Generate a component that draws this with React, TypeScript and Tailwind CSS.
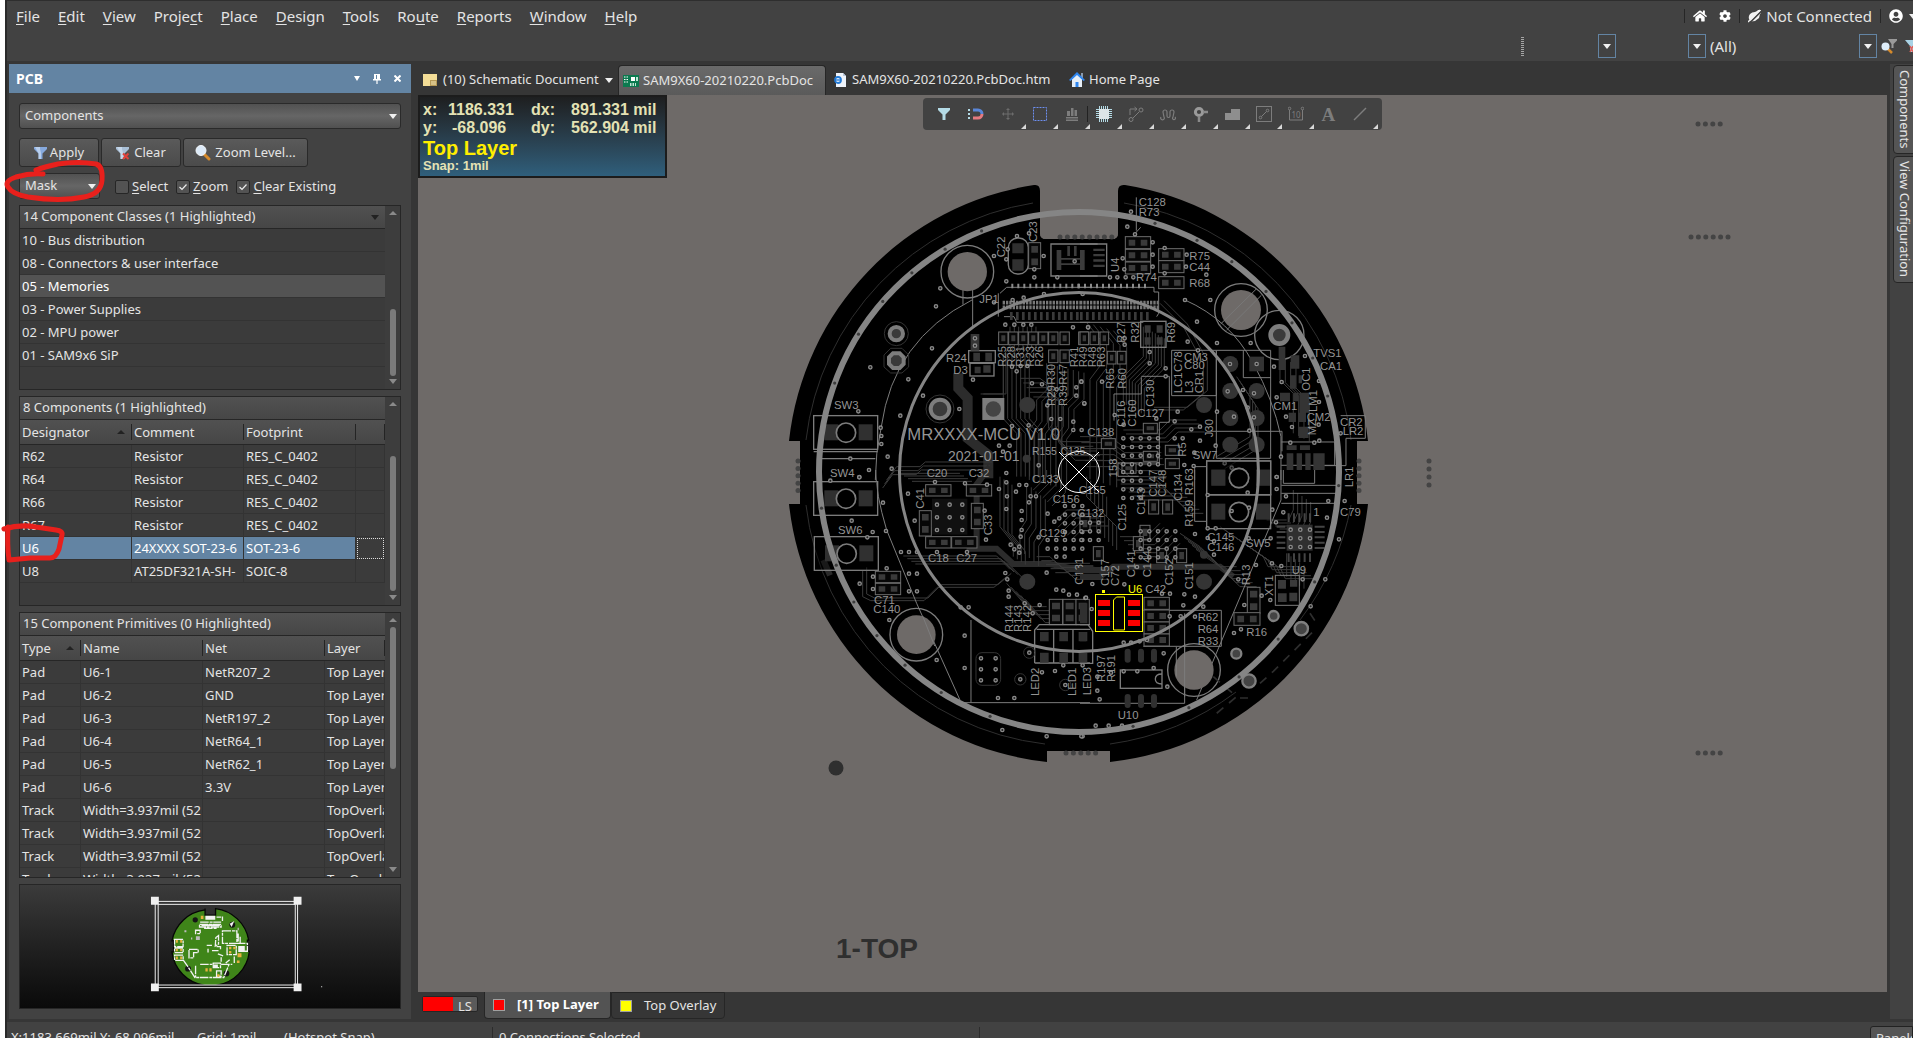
import React from "react";
import { FaHome, FaCog, FaUserCircle } from "react-icons/fa";

const FONT = "font-['Noto_Sans',sans-serif]";

/* ---------- small glyphs ---------- */

function Caret({ className = "text-[#f0f0f0]" }: { className?: string }) {
  return (
    <svg viewBox="0 0 8 5" className={"h-[5px] w-2 shrink-0 " + className} fill="currentColor">
      <path d="M0 0h8L4 5z" />
    </svg>
  );
}

function Up({ className = "text-[#8a8a8a]" }: { className?: string }) {
  return (
    <svg viewBox="0 0 8 4" className={"h-1 w-2 shrink-0 " + className} fill="currentColor">
      <path d="M0 4h8L4 0z" />
    </svg>
  );
}

function Funnel({ crossed = false }: { crossed?: boolean }) {
  return (
    <svg viewBox="0 0 14 14" className="h-[14px] w-[14px] shrink-0">
      <path d="M0 1h13v2L8.500 7.500V13h-4V7.500L0 3z" fill={crossed ? "#a9bfd6" : "#86a9dd"} />
      <path d="M1 1h5v2l1 4v6H4.500V7.500z" fill="#dbe8f6" opacity=".6" />
      {crossed && <path d="M7 7.500l5.500 5.500M12.500 7.500L7 13" stroke="#e0403a" strokeWidth="2" />}
    </svg>
  );
}

function Magnifier() {
  return (
    <svg viewBox="0 0 16 16" className="h-4 w-4 shrink-0">
      <path d="M9 9l5 5" stroke="#d58a2c" strokeWidth="3" strokeLinecap="round" />
      <circle cx="6" cy="5.500" r="5" fill="#dceaf8" stroke="#f4f8fc" strokeWidth="1" />
    </svg>
  );
}

/* ---------- menu bar ---------- */

const MENU: [string, string, string][] = [
  ["", "F", "ile"], ["", "E", "dit"], ["", "V", "iew"], ["Proje", "c", "t"], ["", "P", "lace"], ["", "D", "esign"],
  ["", "T", "ools"], ["Ro", "u", "te"], ["", "R", "eports"], ["", "W", "indow"], ["", "H", "elp"],
];

function Divider() {
  return <span className="h-[14px] w-px bg-[#262626]" />;
}

function ToolbarCombo({ label, value, className }: { label: string; value: string; className: string }) {
  return (
    <label className={"flex h-6 items-center " + className}>
      <select aria-label={label} className="h-6 min-w-0 flex-1 appearance-none bg-transparent pl-0.5 text-[15px] leading-6 outline-none">
        <option>{value}</option>
      </select>
      <span className="flex h-6 w-[18px] shrink-0 items-center justify-center border border-[#6384a3]">
        <Caret />
      </span>
    </label>
  );
}

function Header() {
  return (
    <header className="h-[61px] shrink-0 overflow-hidden border-t border-[#2e2e2e] bg-[#424242]">
      <div className="flex h-[30px] items-center justify-between pl-[9px]">
        <nav className="flex gap-[18px] text-[15px] leading-5">
          {MENU.map(([a, k, b]) => (
            <button key={a + k + b} className="whitespace-nowrap">
              {a}<span className="underline underline-offset-2">{k}</span>{b}
            </button>
          ))}
        </nav>
        <div className="flex items-center gap-2">
          <Divider />
          <button aria-label="Home"><FaHome className="h-[14px] w-[14px] text-white" /></button>
          <button aria-label="Settings" className="ml-1"><FaCog className="h-3 w-3 text-white" /></button>
          <Divider />
          <button className="flex items-center gap-1 whitespace-nowrap text-[15px] leading-5">
            <svg viewBox="0 0 14 14" className="h-[14px] w-[14px]">
              <path d="M1 10C0 6 3 3 7 3l2-1 1-1 3 0 0 3-1 1-1 4-4 3-4 .500z" fill="#f2f2f2" />
              <path d="M1.500 14L14 1.500" stroke="#424242" strokeWidth="1.600" />
              <path d="M0 13L12 1" stroke="#f2f2f2" strokeWidth="1.400" />
            </svg>
            Not Connected
          </button>
          <Divider />
          <button aria-label="Account" className="flex items-center gap-1.5">
            <FaUserCircle className="h-[14px] w-[14px] text-white" />
            <span className="w-1 overflow-hidden"><Caret /></span>
          </button>
        </div>
      </div>
      <div className="flex h-7 items-center justify-end gap-0.5 pt-0.5">
        <svg viewBox="0 0 3 19" className="h-[19px] w-[3px]">
          <path d="M1.500 0v19" stroke="#a5a5a5" strokeWidth="3" strokeDasharray="1 1" />
        </svg>
        <ToolbarCombo label="Net" value="" className="w-[90px]" />
        <ToolbarCombo label="Component" value="" className="w-[88px]" />
        <ToolbarCombo label="Filter" value="(All)" className="w-[169px]" />
        <button aria-label="Find" className="ml-0.5">
          <svg viewBox="0 0 16 16" className="h-4 w-4">
            <path d="M7 1h9v1.500L12.500 6v4h-2V6z" fill="#9a9a9a" />
            <path d="M7 11l4 4" stroke="#d58a2c" strokeWidth="2.500" />
            <circle cx="4.500" cy="8.500" r="4" fill="#dfeefa" />
          </svg>
        </button>
        <button aria-label="Clear filter" className="ml-1.5 w-2 overflow-hidden">
          <svg viewBox="0 0 8 14" className="h-[14px] w-2">
            <path d="M0 1h8v12H5V7z" fill="#a9d3e6" />
            <path d="M5 7l3 6M8 7l-3 6" stroke="#e0605a" strokeWidth="1.500" />
          </svg>
        </button>
      </div>
    </header>
  );
}

/* ---------- left panel ---------- */

const BTN = "flex items-center justify-center rounded-[3px] border border-[#2a2a2a] bg-linear-to-b from-[#5a5a5a] to-[#4b4b4b] whitespace-nowrap";

function Combo({ label, value, className }: { label: string; value: string; className: string }) {
  return (
    <label className={"relative flex items-center " + className}>
      <select aria-label={label} className="h-[26px] w-full appearance-none rounded-[3px] border border-[#2a2a2a] bg-linear-to-b from-[#515151] via-[#666] to-[#505050] pl-[5px] text-[13px] outline-none">
        <option>{value}</option>
      </select>
      <span className="pointer-events-none absolute right-1"><Caret /></span>
    </label>
  );
}

function Check({ first, rest, checked }: { first: string; rest: string; checked?: boolean }) {
  return (
    <label className="flex items-center gap-[3px]">
      <span className="grid h-[14px] w-[14px] place-items-center">
        <input type="checkbox" defaultChecked={checked} className="peer col-start-1 row-start-1 h-[14px] w-[14px] appearance-none rounded-[2px] border border-[#262626] bg-[#535353]" />
        <svg viewBox="0 0 8 8" className="pointer-events-none invisible col-start-1 row-start-1 h-2 w-2 peer-checked:visible">
          <path d="M.500 4l2.500 2.500L7.500 1.500" fill="none" stroke="#ededed" strokeWidth="1.200" />
        </svg>
      </span>
      <span className="whitespace-nowrap"><span className="underline underline-offset-2">{first}</span>{rest}</span>
    </label>
  );
}

function ScrollBar({ before, thumb }: { before: string; thumb: string }) {
  return (
    <div className="flex w-[15px] shrink-0 flex-col items-center bg-[#3d3d3d] py-[5px]">
      <Up />
      <span className={before} />
      <span className={"w-1.5 rounded-full bg-[#7b7b7b] " + thumb} />
      <span className="flex-1" />
      <Caret className="text-[#8a8a8a]" />
    </div>
  );
}

const CELL = "h-[23px] overflow-hidden border-r border-b border-[#333] p-0 pl-0.5 leading-5 text-clip whitespace-nowrap";

function GridBox({ title, height, bar, arrow, children }: { title: string; height: string; bar: React.ReactNode; arrow?: boolean; children: React.ReactNode }) {
  return (
    <section className={"flex overflow-hidden border border-[#262626] bg-[#3b3b3b] " + height}>
      <div className="flex min-w-0 flex-1 flex-col">
        <h2 className="flex h-[23px] shrink-0 items-center justify-between border-b border-[#262626] bg-linear-to-b from-[#515151] to-[#464646] pr-1.5 pl-[3px]">
          {title}{arrow && <Caret className="text-[#222]" />}
        </h2>
        {children}
      </div>
      {bar}
    </section>
  );
}

function DataTable({ cols, heads, rows, selected }: { cols: string[]; heads: string[]; rows: string[][]; selected?: number }) {
  return (
    <table className="w-full table-fixed border-separate border-spacing-0">
      <colgroup>{cols.map((c, i) => <col key={i} className={c} />)}</colgroup>
      <thead>
        <tr>
          {heads.map((h, i) => (
            <th key={i} scope="col" className="h-[25px] overflow-hidden border-b border-[#262626] bg-linear-to-b from-[#515151] to-[#464646] p-0 text-left font-normal">
              <span className="flex h-4 items-center justify-between border-r border-[#242424] pr-1.5 pl-0.5 leading-4">
                {h}{i === 0 && <Up className="text-[#222]" />}
              </span>
            </th>
          ))}
        </tr>
      </thead>
      <tbody>
        {rows.map((r, n) => (
          <tr key={n} className={n === selected ? "text-white" : ""}>
            {r.map((c, i) => (
              <td key={i} className={CELL + (n === selected ? (c ? " bg-[#6384a3]" : " outline-1 -outline-offset-2 outline-[#ddd] outline-dotted") : "")}>{c}</td>
            ))}
          </tr>
        ))}
      </tbody>
    </table>
  );
}

const CLASSES = ["10 - Bus distribution", "08 - Connectors & user interface", "05 - Memories", "03 - Power Supplies", "02 - MPU power", "01 - SAM9x6 SiP"];
const COMPONENTS = [
  ["R62", "Resistor", "RES_C_0402", ""], ["R64", "Resistor", "RES_C_0402", ""], ["R66", "Resistor", "RES_C_0402", ""],
  ["R67", "Resistor", "RES_C_0402", ""], ["U6", "24XXXX SOT-23-6", "SOT-23-6", ""], ["U8", "AT25DF321A-SH-", "SOIC-8", ""],
];
const TRACK = ["Track", "Width=3.937mil (52", "", "TopOverlay"];
const PRIMITIVES = [
  ["Pad", "U6-1", "NetR207_2", "Top Layer"], ["Pad", "U6-2", "GND", "Top Layer"], ["Pad", "U6-3", "NetR197_2", "Top Layer"],
  ["Pad", "U6-4", "NetR64_1", "Top Layer"], ["Pad", "U6-5", "NetR62_1", "Top Layer"], ["Pad", "U6-6", "3.3V", "Top Layer"],
  TRACK, TRACK, TRACK, TRACK,
];

function MiniMap() {
  const white = "M600 965h64M598 972h66v8h-66zM612 984h40M522 1018h26v22h-26zM522 1044h26v14h-26zM522 1066h26v16h-26zM548 1080l14 20 22 34h88l16-40M586 1098v36M600 1094h42M640 1090h22v14h-22zM664 1094h34M668 992h44v38h-44zM682 1036h28v28h-28zM566 1048h28v10h-14v16h-14zM648 1012l8-6v26l-10 6zM650 1040h12v8M716 1000v24M722 1010v20M712 1030h32v24h-20M620 1036h16M624 1046v12M636 1052h20M654 1062l16 6M650 1114h14v16h-14zM650 950h14M668 948v14M600 990h-14v10h14zM664 1072v14M704 1070v20M690 1080l-12 10";
  return (
    <svg viewBox="57 852 1146 375" className="h-full w-full">
      <path d="M615 924v20h32v-20a117 117 0 0 1 101 96h-4v34h6a117 117 0 0 1-102 104h-34a117 117 0 0 1-100-102h5v-34h-5a117 117 0 0 1 101-94z" fill="#3f8519" stroke="#060606" strokeWidth="4" />
      <g fill="#151515">
        <circle cx="585" cy="958" r="8" /><circle cx="698" cy="973" r="9" /><circle cx="563" cy="1107" r="9" /><circle cx="680" cy="1122" r="9" />
      </g>
      <path d={white} fill="none" stroke="#f2f2f2" strokeWidth="4" strokeDasharray="26 3 9 2" />
      <path d="M616 946h30v12h-30zM604 972h56v6h-56zM716 1038h20v18h-20zM640 1094h14v10h-14zM690 970l14-8-8 18z" fill="#f2f2f2" />
      <g fill="#e7b13f">
        <path d="M526 1020h6v8h-6zM539 1020h6v8h-6zM526 1046h6v8h-6zM539 1046h6v8h-6zM526 1070h6v8h-6zM539 1070h6v8h-6zM602 946h8v10h-8zM714 1060h12v12h-12zM688 1040h7v8h-7zM701 1040h7v8h-7zM688 1053h7v8h-7zM616 1106h7v10h-7zM628 1106h7v10h-7zM652 1124h7v8h-7zM712 1082h8v8h-8z" />
      </g>
      <path d="M587 1008h12v12h-12zM552 990h6v6h-6zM572 1012h4v6h-4zM714 982h4v8h-4z" fill="#bcbcbc" />
      <g fill="none" stroke="#f2f2f2" strokeWidth="3">
        <path d="M463 902h434v263H463zM472 911h418v246H472z" />
      </g>
      <g fill="#f0f0f0">
        <path d="M450 888h24v24h-24zM885 888h24v24h-24zM450 1152h24v24h-24zM885 1152h24v24h-24z" />
        <path d="M969 1161h3v3h-3z" />
      </g>
    </svg>
  );
}

function LeftPanel() {
  return (
    <aside className="mb-[3px] flex w-[402px] shrink-0 flex-col bg-[#424242] text-[13px]">
      <div className="flex h-[29px] shrink-0 items-center justify-between bg-[#6384a3] pr-[10px] pl-[7px]">
        <h1 className="text-sm font-bold text-white">PCB</h1>
        <div className="flex items-center gap-[13px] text-white">
          <button aria-label="Panel menu"><svg viewBox="0 0 6 5" className="h-[5px] w-1.5"><path d="M0 0h6L3 5z" fill="currentColor" /></svg></button>
          <button aria-label="Pin"><svg viewBox="0 0 8 10" className="h-[10px] w-2"><path d="M1 0h6v5h1v1.500H4.600V10H3.400V6.500H0V5h1z" fill="currentColor" /><path d="M3 1h1v4H3z" fill="#6384a3" /></svg></button>
          <button aria-label="Close"><svg viewBox="0 0 7 7" className="h-[7px] w-[7px]"><path d="M.500.500l6 6M6.500.500l-6 6" stroke="currentColor" strokeWidth="2" /></svg></button>
        </div>
      </div>
      <div className="flex flex-col px-[10px] pt-[10px]">
        <Combo label="Object kind" value="Components" className="w-full" />
        <div className="mt-[9px] flex h-[29px] gap-0.5">
          <button className={BTN + " w-20 gap-0.5"}><Funnel />Apply</button>
          <button className={BTN + " w-20 gap-1"}><Funnel crossed />Clear</button>
          <button className={BTN + " w-[125px] gap-1"}><Magnifier />Zoom Level...</button>
        </div>
        <div className="mt-1.5 flex items-center">
          <Combo label="Highlight mode" value="Mask" className="w-[81px]" />
          <div className="flex gap-2 pt-0.5 pl-[15px]">
            <Check first="S" rest="elect" />
            <Check first="Z" rest="oom" checked />
            <Check first="C" rest="lear Existing" checked />
          </div>
        </div>
        <div className="mt-1.5 flex flex-col gap-1.5">
          <GridBox title="14 Component Classes (1 Highlighted)" height="h-[185px]" arrow bar={<ScrollBar before="h-[94px]" thumb="h-[67px]" />}>
            <ul>
              {CLASSES.map((c, i) => (
                <li key={c} className={"h-[23px] border-b border-[#333] pl-0.5 leading-[22px]" + (i === 2 ? " bg-[#535353] text-white" : "")}>{c}</li>
              ))}
            </ul>
          </GridBox>
          <GridBox title="8 Components (1 Highlighted)" height="h-[210px]" bar={<ScrollBar before="h-[50px]" thumb="h-[135px]" />}>
            <DataTable cols={["w-28", "w-28", "w-28", ""]} heads={["Designator", "Comment", "Footprint", ""]} rows={COMPONENTS} selected={4} />
          </GridBox>
          <GridBox title="15 Component Primitives (0 Highlighted)" height="h-[266px]" bar={<ScrollBar before="h-[5px]" thumb="h-[142px]" />}>
            <DataTable cols={["w-[61px]", "w-[122px]", "w-[122px]", ""]} heads={["Type", "Name", "Net", "Layer"]} rows={PRIMITIVES} />
          </GridBox>
          <div className="h-[125px] border border-[#262626] bg-linear-to-b from-[#3b3b3b] to-[#0a0a0a]"><MiniMap /></div>
        </div>
      </div>
    </aside>
  );
}

/* ---------- board drawing ---------- */

type Label = [string, number, number, number?];

function Quad({ x, y, children }: { x: number; y: number; children: React.ReactNode }) {
  return <g transform={`translate(${x} ${y}) scale(.3333)`}>{children}</g>;
}

function Labels({ items, size = 34 }: { items: Label[]; size?: number }) {
  return (
    <g fill="#949494" fontSize={size}>
      {items.map(([t, x, y, up], i) => (
        <text key={i} x={x} y={y} transform={up ? `rotate(-90 ${x} ${y})` : undefined}>{t}</text>
      ))}
    </g>
  );
}

function Vias({ at }: { at: string }) {
  return (
    <g fill="#202020" stroke="#8a8a8a" strokeWidth="4">
      {at.split(" ").map((p, i) => {
        const [x, y] = p.split(",").map(Number);
        return <circle key={i} cx={x} cy={y} r="5" />;
      })}
    </g>
  );
}

function ViaGrid({ x, y, nx, ny, dx, dy }: { x: number; y: number; nx: number; ny: number; dx: number; dy: number }) {
  const pts: string[] = [];
  for (let i = 0; i < nx; i++) for (let j = 0; j < ny; j++) pts.push(`${x + i * dx},${y + j * dy}`);
  return <Vias at={pts.join(" ")} />;
}

/* parallel traces: every copy is shifted by (dx, dy) */
function Bundle({ d, n, dx, dy, w = 3, c = "#3b3b3b" }: { d: string; n: number; dx: number; dy: number; w?: number; c?: string }) {
  return (
    <g fill="none" stroke={c} strokeWidth={w}>
      {Array.from({ length: n }, (_, i) => <path key={i} d={d} transform={`translate(${i * dx} ${i * dy})`} />)}
    </g>
  );
}

/* two-pad chip parts with their outline */
function Chips({ at, w, h }: { at: string; w: number; h: number }) {
  return (
    <g>
      {at.split(" ").map((p, i) => {
        const [x, y] = p.split(",").map(Number);
        const wide = w > h;
        return (
          <g key={i}>
            <rect x={x} y={y} width={w} height={h} fill="#060606" stroke="#6c6c6c" strokeWidth="3" />
            {wide ? (
              <path d={`M${x + 10} ${y + 9}h${w * 0.26}v${h - 18}h-${w * 0.26}zM${x + w - 10 - w * 0.26} ${y + 9}h${w * 0.26}v${h - 18}h-${w * 0.26}z`} fill="#3a3a3a" />
            ) : (
              <path d={`M${x + 8} ${y + 10}h${w - 16}v${h * 0.26}h-${w - 16}zM${x + 8} ${y + h - 10 - h * 0.26}h${w - 16}v${h * 0.26}h-${w - 16}z`} fill="#3a3a3a" />
            )}
          </g>
        );
      })}
    </g>
  );
}

function Switch({ x, y, flip }: { x: number; y: number; flip?: boolean }) {
  return (
    <g>
      <rect x={x} y={y} width="192" height="101" fill="#000" fillOpacity=".4" stroke="#7c7c7c" strokeWidth="4" />
      <rect x={x + (flip ? 14 : 32)} y={y + 26} width="42" height="48" fill="#303030" />
      <rect x={x + (flip ? 148 : 135)} y={y + 26} width="42" height="48" fill="#303030" />
      <circle cx={x + 97} cy={y + 51} r="29" fill="#000" stroke="#7c7c7c" strokeWidth="5" />
    </g>
  );
}

function dots(x: number, y: number, n: number, dx: number, dy: number, r = 2.5) {
  return Array.from({ length: n }, (_, i) => <circle key={`${x}-${y}-${i}`} cx={x + i * dx} cy={y + i * dy} r={r} />);
}

const LINE = { fill: "none", stroke: "#7c7c7c", strokeWidth: 4 };

function Board() {
  return (
    <svg viewBox="418 95 1469 897" preserveAspectRatio="xMinYMin meet" className="block h-full w-full" fontFamily="'Liberation Sans',sans-serif" role="img" aria-label="PCB layout">
      <path d="M1034 185q6-1 6 6v42q0 6 6 6h66q6 0 6-6v-42q0-7 7-6A291 291 0 0 1 1368 441h-11v63h11A291 291 0 0 1 1110 762v-11h-63v11A291 291 0 0 1 789 504h11v-63h-11A291 291 0 0 1 1034 185z" fill="#000" />
      <path d="M1040 190v43q0 6 6 6h66q6 0 6-6v-43z" fill="#6e6a68" />
      <g fill="#444">
        {dots(1060, 237, 8, 7.4, 0)}
        {dots(1066, 753, 5, 7.4, 0)}
        {dots(798, 461, 5, 0, 7.4)}
        {dots(1359, 461, 5, 0, 7.4)}
        {dots(1429, 461, 4, 0, 8)}
        {dots(1698, 124, 4, 7.4, 0)}
        {dots(1691, 237, 6, 7.4, 0)}
        {dots(1698, 753, 4, 7.4, 0)}
      </g>
      <circle cx="836" cy="768" r="7.500" fill="#2f2f2f" />
      <text x="836" y="958" fontSize="28" fontWeight="bold" fill="#2f2f2f">1-TOP</text>
      <g fill="none" stroke="#2e2e2e">
        <path d="M1033 203A272 272 0 0 0 806 440M1124 203A272 272 0 0 1 1351 440M806 505A272 272 0 0 0 1045 744M1351 505A272 272 0 0 1 1300 620M1236 692A272 272 0 0 1 1110 744" />
      </g>

      {/* upper left */}
      <Quad x={780} y={170}>
        <path d="M535 610v45l28 30v120l62 50v70" fill="none" stroke="#2c2c2c" strokeWidth="30" />
        <Bundle d="M690 470v60l-20 26v190l40 44v130" n={7} dx={13} dy={0} />
        <Bundle d="M800 580v80l-30 30v60l-22 30v150" n={8} dx={16} dy={4} />
        <Bundle d="M720 625h60l26 20v130l40 40h84" n={5} dx={10} dy={14} />
        <Bundle d="M320 930l30-40h70l16-14h200" n={3} dx={-6} dy={12} />
        <Bundle d="M602 672h68v-110" n={2} dx={8} dy={0} />
        <path {...LINE} strokeWidth="3" d="M576 390Q340 510 304 770Q286 850 286 930M549 340v64M578 334v134" />
        <path {...LINE} d="M660 370l20-18h250M672 440h30l8 17h220M655 370v70" strokeWidth="3" />
        <path d="M694 348h206" stroke="#8a8a8a" strokeWidth="14" strokeDasharray="6 12" />
        <path d="M668 398h232M668 412h232" stroke="#777" strokeWidth="11" strokeDasharray="7 3" />
        <path d="M690 438h210" stroke="#3a3a3a" strokeWidth="24" strokeDasharray="8 10" />
        <path d="M953 222H813v96h140" {...LINE} />
        <path d="M830 240h14v60h-14zM862 228h8v30h-8zM882 228h8v30h-8zM840 264h60v5h-60zM840 280h60v5h-60z" fill="#3c3c3c" />
        <rect x="685" y="204" width="60" height="108" rx="28" {...LINE} />
        <path d="M697 220h34v30h-34zM697 268h34v34h-34z" fill="#303030" />
        <Chips at="746,218" w={36} h={78} />
        <circle cx="562" cy="305" r="59" fill="#6e6a68" /><circle cx="562" cy="305" r="79" {...LINE} />
        <Chips at="656,486 686,486 716,486 746,486 776,486 806,486 840,486 896,486 806,540 840,540" w={28} h={38} />
        <rect x="566" y="542" width="80" height="36" {...LINE} /><rect x="570" y="580" width="72" height="38" {...LINE} />
        <path d="M572 492h26v50h-26zM580 548h20v26h-20zM616 548h20v26h-20zM584 590h18v20h-18zM610 586h22v22h-22z" fill="#363636" />
        <g fill="#3a3a3a" stroke="#7d7d7d" strokeWidth="12">
          <circle cx="349" cy="491" r="20" /><path d="M339 550h20l12 12v20l-12 12h-20l-12-12v-20z" /><circle cx="480" cy="717" r="28" />
          <rect x="613" y="690" width="54" height="54" fill="#7d7d7d" />
        </g>
        <circle cx="640" cy="717" r="23" fill="#444" />
        <g fill="none" stroke="#333" strokeWidth="3"><circle cx="349" cy="491" r="36" /><path d="M312 555l20-20h34l20 20v36l-20 18h-34l-20-18z" /><circle cx="480" cy="717" r="42" /></g>
        <circle cx="742" cy="705" r="24" fill="#363636" /><circle cx="740" cy="866" r="12" fill="#363636" />
        <Switch x={101} y={737} />
        <path {...LINE} d="M101 845h192M118 866h168" />
        <Vias at="481,355 468,409 456,535 271,592 385,628 429,677 361,737 538,717 235,724 302,773 304,798 304,822 323,860 211,866 335,896 267,900 238,921 642,258 683,238 679,268 711,198 747,190 791,258 763,298 763,322 679,334 832,322 884,274 642,397 676,464 703,464 730,464 754,464 879,472 925,472 585,505 585,527 579,629 792,372 908,372 731,383 698,390 696,590 722,588 742,588 710,604 756,640 786,643 830,658 904,635 889,652 889,677 913,701 802,706 814,747 841,747 880,755 880,780 905,780 746,766 657,827 689,827 669,845 776,886 679,909 696,768" />
        <Labels items={[["C22", 674, 262, 1], ["C23", 771, 216, 1], ["JP1", 598, 398], ["R24", 498, 575], ["D3", 520, 612], ["SW3", 162, 716], ["R25", 678, 590, 1], ["R28", 706, 590, 1], ["R31", 733, 590, 1], ["R23", 761, 590, 1], ["R26", 789, 590, 1], ["R41", 893, 592, 1], ["R30", 824, 644, 1], ["R47", 862, 644, 1], ["R29", 824, 708, 1], ["R39", 862, 708, 1]]} />
        <Labels items={[["R155", 756, 854], ["C135", 842, 854]]} size={31} />
        <Labels items={[["MRXXXX-MCU V1.0", 382, 810]]} size={50} />
        <Labels items={[["2021-01-01", 504, 872]]} size={42} />
      </Quad>

      {/* upper right */}
      <Quad x={1080} y={170}>
        <Bundle d="M20 458l40 50v80l-30 40v300" n={5} dx={20} dy={6} />
        <Bundle d="M190 470v90l-60 60v80" n={8} dx={9} dy={5} />
        <Bundle d="M240 400l70 70 60 110v90l-60 50h-100" n={2} dx={12} dy={-8} />
        <Bundle d="M130 780h110l30-30h80M410 860l100-60v-120l-40-60" n={4} dx={8} dy={12} />
        <Bundle d="M600 560v70l40 40v120" n={4} dx={16} dy={8} />
        <Bundle d="M0 800h90l40 30h110" n={6} dx={4} dy={18} />
        <path {...LINE} strokeWidth="3" d="M315 390Q450 450 520 580Q580 690 603 800V930M169 82v100M182 172l-20 22" />
        <path {...LINE} d="M0 352h222v14h14v64l-6 10" strokeWidth="3" /><path d="M0 457h190" {...LINE} strokeWidth="3" />
        <path d="M-6 348h206" stroke="#8a8a8a" strokeWidth="14" strokeDasharray="6 12" />
        <path d="M0 398h236M0 412h236" stroke="#777" strokeWidth="11" strokeDasharray="7 3" />
        <path d="M0 438h210" stroke="#3a3a3a" strokeWidth="24" strokeDasharray="8 10" />
        <path d="M0 222h80v96H0" {...LINE} />
        <path d="M0 240h14v60H0zM40 236h34v7H40zM40 252h34v7H40zM40 268h34v7H40zM40 284h34v7H40z" fill="#3c3c3c" />
        <Chips at="136,200 136,238 136,276 236,236 236,272 236,320" w={76} h={36} />
        <rect x="182" y="454" width="76" height="78" {...LINE} /><path d="M194 466h18v22h-18zM230 466h18v22h-18zM194 502h18v22h-18zM230 502h18v22h-18z" fill="#3a3a3a" />
        <Chips at="0,486 30,486 60,486 82,544 112,544" w={26} h={38} />
        <path {...LINE} strokeWidth="3" d="M275 541h134v136h-134zM184 619h84v138h-30v122h-124v40h62M102 672h82v-50M102 672v80M409 541h163v324h-163zM490 541v82h82M380 784h226v60M604 816h160v70h-160M782 737h74v68h-58v82h-100" />
        <circle cx="483" cy="420" r="60" fill="#6e6a68" /><circle cx="483" cy="420" r="79" {...LINE} /><path d="M422 462l106-104M440 480l104-104" stroke="#777" strokeWidth="3" />
        <circle cx="598" cy="495" r="74" {...LINE} /><circle cx="598" cy="495" r="26" fill="#3a3a3a" stroke="#7d7d7d" strokeWidth="14" />
        <g fill="#343434">
          <circle cx="451" cy="582" r="24" /><rect x="508" y="560" width="44" height="44" /><circle cx="451" cy="663" r="24" /><circle cx="530" cy="663" r="24" /><circle cx="451" cy="744" r="24" /><circle cx="530" cy="744" r="24" /><circle cx="451" cy="824" r="24" /><circle cx="530" cy="824" r="24" /><circle cx="372" cy="705" r="24" />
          <path d="M596 530h20v70h-20zM632 556h26v40h-26zM600 668h30v26h-30zM640 668h16v26h-16zM658 668h30v60h-30zM626 728h22v28h-22zM656 728h22v28h-22zM630 616h18v40h-18zM656 616h10v24h-10zM620 826h30v14h-30zM660 826h30v14h-30zM620 850h20v50h-20zM650 850h16v50h-16zM676 850h16v50h-16zM700 850h34v50h-34zM656 770h30v34h-30z" />
        </g>
        <Chips at="190,760 190,844 256,826 256,866 64,806 126,880" w={42} h={30} />
        <Switch x={380} y={873} flip /><path {...LINE} d="M344 890v40M344 890h36" strokeWidth="3" />
        <Vias at="153,125 142,170 165,193 218,217 218,254 218,290 128,265 133,298 254,234 320,254 318,290 379,314 254,310 90,322 112,322 137,322 160,322 391,390 315,390 351,455 323,515 411,519 512,519 354,541 450,582 530,582 443,664 489,660 522,670 462,740 522,742 503,713 411,725 508,782 407,827 582,590 675,558 605,636 717,633 590,682 717,696 618,740 636,771 716,764 718,812 782,790 631,818 703,818 360,812 360,770 334,778 293,725 284,754 257,619 257,595 209,546 209,580 66,635 4,635 13,700 24,472 104,735 131,764 308,805 284,805 313,885 434,880 455,893 590,921 341,888 343,848 134,505 134,524 229,746 603,860 776,857" />
        <ViaGrid x={130} y={805} nx={5} ny={4} dx={26} dy={26} />
        <Labels items={[["C128", 176, 108], ["R73", 176, 137], ["R75", 328, 270], ["C44", 328, 303], ["R74", 168, 333], ["R68", 328, 350], ["U4", 116, 306, 1], ["R27", 134, 518, 1], ["R32", 176, 518, 1], ["R69", 284, 518, 1], ["R49", 20, 592, 1], ["R48", 48, 592, 1], ["R63", 76, 592, 1], ["R65", 103, 656, 1], ["R60", 137, 656, 1], ["C130", 221, 710, 1], ["C116", 135, 770, 1], ["C160", 168, 770, 1], ["C127", 172, 741], ["C138", 22, 797], ["LC1", 306, 670, 1], ["C78", 306, 606, 1], ["L3", 338, 670, 1], ["CR1", 370, 670, 1], ["CM3", 312, 572], ["C80", 312, 598], ["J30", 400, 802, 1], ["SW7", 338, 868], ["TVS1", 700, 560], ["CA1", 720, 599], ["OC1", 690, 662, 1], ["LM1", 712, 726, 1], ["CM1", 580, 721], ["CM2", 680, 752], ["MZ", 708, 796, 1], ["CR2", 780, 768], ["LR2", 788, 796], ["R5", 318, 860, 1], ["158", 110, 922, 1]]} />
      </Quad>

      {/* lower left */}
      <Quad x={780} y={470}>
        <path d="M560 236h90l50 46h110l60 12h70" fill="none" stroke="#2c2c2c" strokeWidth="18" />
        <path d="M570 70l60-80M590 70v160M420 180h50M130 270l20 46M485 90v26" fill="none" stroke="#2a2a2a" strokeWidth="18" />
        <Bundle d="M660 20v150l40 50v40M360 10h180M370 258h280l40 40" n={4} dx={12} dy={8} />
        <Bundle d="M248 300v80l24 12h160l40-40h170l40-34" n={2} dx={12} dy={-8} />
        <Bundle d="M740 40v110l-20 30v60M760 60l40-40v-20M820 160l40-40h70M770 260h40l20 20h100M680 340l60 70h60" n={5} dx={14} dy={12} />
        <path {...LINE} strokeWidth="3" d="M287 0Q287 70 320 180L410 400 540 690M573 450v248h357M540 698h33" />
        <Switch x={101} y={35} /><Switch x={103} y={200} />
        <Chips at="437,44 559,44 437,200 515,200 286,304 286,340" w={76} h={34} />
        <Chips at="418,122 574,100" w={36} h={76} />
        <rect x="456" y="86" width="106" height="108" fill="#101010" /><ViaGrid x={471} y={104} nx={3} ny={3} dx={38} dy={38} />
        <circle cx="409" cy="494" r="58" fill="#6e6a68" /><circle cx="409" cy="494" r="79" {...LINE} /><path d="M428 438l36 90" stroke="#7c7c7c" strokeWidth="3" />
        <circle cx="742" cy="335" r="24" fill="#363636" />
        <Chips at="808,388 849,388 888,388" w={40} h={76} />
        <g {...LINE}><path d="M764 579V480l14-16h152M764 579h166M821 478v101M879 478v101M770 478h160" /></g>
        <path d="M780 486h26v28h-26zM838 486h26v28h-26zM896 486h26v28h-26zM780 548h26v30h-26zM838 548h26v30h-26zM896 548h26v30h-26z" fill="#333" />
        <g fill="none" stroke="#333" strokeWidth="3"><rect x="588" y="548" width="74" height="98" rx="18" /><circle cx="721" cy="628" r="17" /><circle cx="748" cy="548" r="17" /><circle cx="856" cy="645" r="17" /></g>
        <ViaGrid x={603} y={565} nx={2} ny={3} dx={44} dy={33} />
        <Vias at="151,32 238,22 384,71 309,98 215,152 278,186 318,183 404,152 262,202 387,246 363,246 411,246 320,295 279,320 387,311 411,311 279,357 387,364 411,364 239,341 328,450 470,570 554,497 554,594 566,412 542,412 465,36 555,40 621,44 614,122 618,209 471,246 561,246 679,37 681,79 679,117 708,65 657,57 718,45 739,45 752,79 768,79 747,97 725,123 725,150 725,180 722,200 718,230 692,224 703,238 718,248 776,202 803,131 823,155 838,145 829,260 854,260 800,308 676,309 682,328 686,362 686,380 829,359 850,362 891,374 867,374 916,384 734,400 779,405 758,430 748,548 721,628 856,645 825,603 786,607 850,586 908,586 654,684 703,684 667,780 800,799 908,799" />
        <ViaGrid x={803} y={210} nx={5} ny={2} dx={26} dy={26} /><ViaGrid x={855} y={108} nx={3} ny={4} dx={26} dy={26} />
        <Labels items={[["SW4", 150, 22], ["C20", 440, 22], ["C32", 566, 22], ["SW6", 174, 191], ["C41", 432, 116, 1], ["C33", 637, 196, 1], ["C18", 444, 276], ["C27", 529, 276], ["C71", 282, 402], ["C140", 280, 430], ["C133", 756, 38], ["C156", 818, 98], ["C129", 778, 200], ["C131", 908, 344, 1], ["R144", 698, 486, 1], ["R143", 726, 486, 1], ["R142", 754, 486, 1], ["LED2", 778, 678, 1], ["LED1", 887, 678, 1]]} />
      </Quad>

      {/* lower right */}
      <Quad x={1080} y={470}>
        <path d="M0 320h60l40-30h320l40 30M0 300h100" fill="none" stroke="#2c2c2c" strokeWidth="18" />
        <Bundle d="M20 20v60l30 30v70M110 30h120l40 40h40M120 200h80l40-40M300 190l60 40 60 60h50" n={6} dx={12} dy={12} />
        <Bundle d="M420 170l130 90 14 30h90M640 60v60l-14 30M560 150h60M620 250v70" n={5} dx={13} dy={9} />
        <path d="M620 164h78v78h-78z" fill="#303030" />
        <path d="M590 170h26M590 186h26M590 202h26M590 218h26M590 234h26M704 170h30M704 186h30M704 202h30M704 218h30M704 234h30M626 250v26M642 250v26M658 250v26M674 250v26M690 250v26M626 130v26M642 130v26M658 130v26M674 130v26M690 130v26" stroke="#444" strokeWidth="6" />
        <path {...LINE} strokeWidth="3" d="M603 0v90L350 690M314 430v270H0M190 421h234v108H190M344 0v154h36M604 46h170M604 70h170M604 100h170M610 0v40h94V0" />
        <Switch x={380} y={-27} flip /><Switch x={380} y={75} flip />
        <circle cx="342" cy="600" r="59" fill="#6e6a68" /><circle cx="342" cy="600" r="79" {...LINE} />
        <path d="M289 530v90M314 520v160" stroke="#7c7c7c" strokeWidth="3" />
        <g fill="#343434"><circle cx="372" cy="335" r="24" /><circle cx="372" cy="254" r="12" /></g>
        <Chips at="192,382 192,420 192,456 192,492" w={76} h={36} />
        <Chips at="502,352" w={38} h={78} /><Chips at="462,428" w={78} h={38} />
        <rect x="586" y="316" width="72" height="90" {...LINE} strokeWidth="3" /><path d="M594 330h24v26h-24zM630 330h22v20h-22zM594 370h26v26h-26zM628 368h24v26h-24z" fill="#3a3a3a" />
        <g {...LINE}><rect x="121" y="600" width="125" height="55" /><path d="M246 612q-20 0-20 15t20 15M0 464h24l14 20v96H0" /></g>
        <g fill="#303030">
          <rect x="134" y="536" width="18" height="42" rx="9" /><rect x="174" y="536" width="18" height="42" rx="9" /><rect x="213" y="536" width="18" height="42" rx="9" />
          <rect x="134" y="672" width="18" height="42" rx="9" /><rect x="174" y="672" width="18" height="42" rx="9" /><rect x="213" y="672" width="18" height="42" rx="9" />
          <path d="M0 486h18v28H0zM0 400h22v60H0z" />
        </g>
        <path d="M540 640l40-36 120-120M480 684h24M690 430l20 30M400 620l70 60-60 50" stroke="#2e2e2e" strokeWidth="5" fill="none" strokeDasharray="26 22" />
        <g fill="#444" stroke="#808080" strokeWidth="7">
          <circle cx="664" cy="476" r="20" /><circle cx="507" cy="633" r="20" /><circle cx="581" cy="438" r="15" /><circle cx="469" cy="551" r="15" />
        </g>
        <Chips at="206,90 248,90 180,166 40,230 160,200 230,236 290,236 0,140" w={30} h={42} />
        <ViaGrid x={632} y={179} nx={3} ny={3} dx={29} dy={26} /><ViaGrid x={130} y={6} nx={3} ny={4} dx={26} dy={26} /><ViaGrid x={182} y={184} nx={5} ny={4} dx={26} dy={26} /><ViaGrid x={4} y={158} nx={3} ny={3} dx={26} dy={26} />
        <Vias at="383,75 455,123 503,68 507,113 383,175 407,175 383,204 402,214 402,254 345,192 506,205 572,205 590,57 590,21 618,79 577,119 610,127 588,157 745,93 794,93 741,143 777,208 604,288 576,280 528,285 475,328 668,328 736,328 692,409 571,390 545,377 493,405 483,478 462,489 313,373 345,380 370,410 310,406 270,371 246,371 269,439 302,439 345,440 251,550 262,650 221,594 172,604 131,604 153,518 131,518 179,514 201,510 35,417 18,383 88,378 116,390 133,343 37,342 171,291 52,662 59,688 52,620 93,608 47,767 86,767 126,767 168,767 4,799" />
        <Labels items={[["C132", -8, 142], ["C155", -4, 72], ["C125", 138, 182, 1], ["C143", 194, 134, 1], ["C147", 230, 80, 1], ["C148", 258, 80, 1], ["C134", 306, 92, 1], ["R159", 338, 170, 1], ["R163", 338, 76, 1], ["C157", 88, 348, 1], ["C72", 116, 348, 1], ["C141", 164, 322, 1], ["C144", 212, 322, 1], ["C152", 280, 346, 1], ["C151", 338, 358, 1], ["C145", 382, 212], ["C146", 382, 243], ["SW5", 498, 230], ["C42", 196, 368], ["R62", 353, 453], ["R64", 353, 489], ["R33", 353, 525], ["R13", 511, 346, 1], ["XT1", 578, 378, 1], ["R16", 499, 497], ["U9", 635, 311], ["C79", 780, 139], ["1", 700, 138], ["LR1", 818, 52, 1], ["R197", 76, 636, 1], ["R191", 104, 636, 1], ["LED3", 32, 676, 1], ["U10", 113, 746]]} />
      </Quad>

      <g fill="none" stroke="#858585">
        <circle cx="1079" cy="472" r="260" strokeWidth="6" />
        <circle cx="1079" cy="472" r="179.500" strokeWidth="3" />
      </g>
      <g fill="#3d3d3d">
        {[17, 27, 36, 46, 55, 64, 73, 93, 115, 130, 142, 155, 168, 200, 212, 222, 231, 240, 249, 262, 290, 302, 311, 320, 329, 338].map((a) => (
          <circle key={a} cx={1079 + 260 * Math.sin((a * Math.PI) / 180)} cy={472 - 260 * Math.cos((a * Math.PI) / 180)} r="1.600" />
        ))}
      </g>

      {/* highlighted part */}
      <g>
        <rect x="1095.500" y="594.500" width="47" height="37" fill="#000" stroke="#ff0" />
        <path d="M1113.500 600l3-3h8v33h-11z" fill="none" stroke="#ff0" />
        <path d="M1098 600h12v6h-12zM1098 610h12v6h-12zM1098 620h12v6h-12zM1128 600h12v6h-12zM1128 610h12v6h-12zM1128 620h12v6h-12z" fill="#f00" />
        <rect x="1102" y="590" width="3" height="3" fill="#ff0" />
        <text x="1128" y="593" fontSize="11" fill="#ff0">U6</text>
      </g>

      {/* cursor */}
      <g fill="none" stroke="#fff">
        <circle cx="1079" cy="472" r="20.500" />
        <path d="M1059 452l40 40M1099 452l-40 40" />
      </g>
    </svg>
  );
}

/* ---------- active bar ---------- */

const G = "#7d7d7d";
const TOOLS: { name: string; art: React.ReactNode; more?: boolean; split?: boolean }[] = [
  { name: "Selection filter", art: <path d="M2 2h12v2L9.500 8.500V14h-3V8.500L2 4z" fill="#b4dbe6" /> },
  { name: "Snapping", art: <><path d="M5 4h5a4 4 0 0 1 4 4" fill="none" stroke="#5a86d8" strokeWidth="3" /><path d="M14 8a4 4 0 0 1-4 4H5" fill="none" stroke="#e57a80" strokeWidth="3" /><path d="M1 3v11" stroke="#b4dbe6" strokeWidth="2" strokeDasharray="2 2" /></> },
  { name: "Move", more: true, art: <path d="M8 2v12M2 8h12M6.500 3.500h3M6.500 12.500h3M3.500 6.500v3M12.500 6.500v3" stroke="#6c6c6c" /> },
  { name: "Select area", more: true, art: <rect x="1.500" y="1.500" width="13" height="13" fill="none" stroke="#6d8ff0" strokeDasharray="2 1" /> },
  { name: "Align", more: true, split: true, art: <path d="M2 11h12v1.500H2zM3 5h3v5H3zM7 2h2.500v8H7zM10.500 4h2.500v6h-2.500zM2 13.500h12V15H2z" fill={G} /> },
  { name: "Place component", more: true, art: <><path d="M1.500 3v10M14.500 3v10" fill="none" stroke="#b4dbe6" strokeWidth="3" strokeDasharray="1 1" /><path d="M3 1.500h10M3 14.500h10" fill="none" stroke="#b4dbe6" strokeWidth="3" strokeDasharray="1 1" /><rect x="3" y="3" width="10" height="10" fill="#dde5e8" /></> },
  { name: "Route", more: true, art: <g fill="none" stroke={G}><circle cx="3" cy="13.500" r="2" /><circle cx="13" cy="4" r="2" /><path d="M2 9V3h6M6.500 1l2.500 2-2.500 2M5 12l6-6" /></g> },
  { name: "Tune", more: true, art: <path d="M1 11a1.800 1.800 0 1 0 3 0L3 6a2 2 0 0 1 4 0v4a1.500 1.500 0 0 0 3 0V6a2 2 0 0 1 4 0l-1 5a1.500 1.500 0 1 0 2 0" fill="none" stroke={G} strokeWidth="1.200" /> },
  { name: "Via", more: true, art: <><circle cx="7" cy="6" r="3.600" fill="none" stroke="#9a9a9a" strokeWidth="3" /><path d="M11 6h5M7 10v6" stroke="#8a8a8a" strokeWidth="2.500" /></> },
  { name: "Polygon", more: true, art: <path d="M1 7h6V3h9v11H1z" fill="#8e8e8e" /> },
  { name: "Design rule", more: true, art: <g fill="none" stroke={G}><rect x=".500" y=".500" width="15" height="15" /><circle cx="4.500" cy="11.500" r="1.300" /><circle cx="11.500" cy="4.500" r="1.300" /><path d="M5.500 10.500l5-5" /></g> },
  { name: "Dimension", more: true, art: <><g fill="none" stroke={G}><path d="M1.500 4v10h13V4" /><circle cx="1.500" cy="2.500" r="1.300" /><circle cx="14.500" cy="2.500" r="1.300" /></g><text x="3.500" y="11.500" fontSize="8" fill={G}>10</text></> },
  { name: "Text", art: <text x="1.500" y="14.500" fontSize="19" fontWeight="bold" fontFamily="'Liberation Serif',serif" fill={G}>A</text> },
  { name: "Line", more: true, art: <path d="M2 14L14 2" stroke={G} strokeWidth="1.500" /> },
];

function ActiveBar() {
  return (
    <div className="absolute top-[3px] left-[505px] flex h-8 rounded bg-[#424242] pr-1.5 pl-[5px]">
      {TOOLS.map((t) => (
        <button key={t.name} aria-label={t.name} className={"relative flex h-8 w-8 items-center justify-center" + (t.split ? " after:absolute after:right-0 after:h-4 after:w-px after:bg-[#222]" : "")}>
          <svg viewBox="0 0 16 16" className="h-4 w-4">{t.art}</svg>
          {t.more && (
            <svg viewBox="0 0 5 5" className="absolute -right-0.5 bottom-px h-[5px] w-[5px]"><path d="M5 0v5H0z" fill="#d8d8d8" /></svg>
          )}
        </button>
      ))}
    </div>
  );
}

function Hud() {
  return (
    <div className="absolute top-0 left-0 h-[83px] w-[249px] border-2 border-[#1c1c1c] bg-linear-to-b from-[#1e1f20] to-[#2f5f7c] pt-1 pl-[3px] font-['Liberation_Sans',sans-serif] font-bold text-[#e4e2b4]">
      <div className="grid grid-cols-[25px_83px_40px_1fr] text-base leading-[18px] whitespace-nowrap">
        <span>x:</span><span>1186.331</span><span>dx:</span><span>891.331 mil</span>
        <span>y:</span><span className="pl-1">-68.096</span><span>dy:</span><span>562.904 mil</span>
      </div>
      <div className="text-xl leading-[22px] text-[#ffee00]">Top Layer</div>
      <div className="text-[13px] leading-[14px]">Snap: 1mil</div>
    </div>
  );
}

/* ---------- document area ---------- */

function DocTabs() {
  return (
    <div className="flex h-[34px] shrink-0 items-end text-[13px] whitespace-nowrap">
      <button className="flex h-[30px] w-50 items-center gap-1.5 pl-[5px]">
        <svg viewBox="0 0 14 12" className="h-3 w-[14px] shrink-0"><rect width="14" height="12" fill="#f3dd96" /><path d="M7 6h7v6H7z" fill="#b79a56" /><path d="M8 8h5M8 10h5" stroke="#f6e8b8" /></svg>
        (10) Schematic Document
        <Caret />
      </button>
      <button className="flex h-[30px] w-[208px] items-center gap-1 rounded-t border border-b-0 border-[#262626] bg-linear-to-b from-[#6a6a6a] to-[#5a5a5a] pl-1">
        <svg viewBox="0 0 16 12" className="h-3 w-4 shrink-0"><rect width="16" height="12" fill="#0b7a4f" /><path d="M1 2h5M1 4.500h5M1 7h5" stroke="#fff" strokeDasharray="1.500 1" /><path d="M8 2h4v4H8z" fill="#fff" /><path d="M13 2h2v4h-2zM7 8h1.500v3H7zM9.500 8H11v3H9.500zM12 8h1v3h-1z" fill="#bfe6d4" /></svg>
        SAM9X60-20210220.PcbDoc
      </button>
      <button className="flex h-[30px] w-[232px] items-center gap-1.5 pl-2">
        <svg viewBox="0 0 12 14" className="h-[14px] w-3 shrink-0"><path d="M2 0h7l3 3v11H2z" fill="#eef3fa" /><path d="M9 0v3h3z" fill="#b8c7dc" /><circle cx="4" cy="7" r="3" fill="none" stroke="#2179d6" strokeWidth="1.800" /><path d="M2 7h5" stroke="#2179d6" strokeWidth="1.300" /></svg>
        SAM9X60-20210220.PcbDoc.htm
      </button>
      <button className="flex h-[30px] items-center gap-1 pl-[11px]">
        <svg viewBox="0 0 16 16" className="h-4 w-4 shrink-0"><path d="M12 1h2v5h-2z" fill="#8a9bb0" /><path d="M3 7l5-5 5 5v8H3z" fill="#e6eef7" /><path d="M0 8l8-8 8 8-1.500 1L8 3 1.500 9z" fill="#2f86ef" /><path d="M6.500 10h3v5h-3z" fill="#2f86ef" /></svg>
        Home Page
      </button>
    </div>
  );
}

function LayerTabs() {
  return (
    <div className="flex h-[30px] shrink-0 items-start pl-1 text-[13px] whitespace-nowrap">
      <button className="mt-1 flex h-4 w-14 rounded-[2px] border border-[#262626] bg-[#5a5a5a]">
        <span className="h-full w-[30px] bg-[#f00]" /><span className="flex-1 text-center leading-[18px]">LS</span>
      </button>
      <button className="ml-1.5 flex h-[27px] w-[127px] items-center gap-3 rounded-b border border-t-0 border-[#262626] bg-[#535353] pl-2 font-bold text-white">
        <span className="h-3 w-3 shrink-0 border border-[#a0a0a0] bg-[#f00]" />[1] Top Layer
      </button>
      <button className="flex h-[27px] w-[114px] items-center gap-3 rounded-b border border-[#262626] pl-2">
        <span className="h-3 w-3 shrink-0 border border-[#a0a0a0] bg-[#ff0]" />Top Overlay
      </button>
    </div>
  );
}

function StatusBar() {
  return (
    <footer className="flex h-4 shrink-0 items-start overflow-hidden bg-[#424242] pl-1 text-[13px] leading-5 whitespace-nowrap">
      <span className="w-[186px] pt-[5px]">X:1183.669mil Y:-68.096mil</span>
      <span className="w-[87px] pt-[5px]">Grid: 1mil</span>
      <span className="w-[208px] pt-[5px]">(Hotspot Snap)</span>
      <span className="mt-[5px] mr-1.5 h-4 w-px bg-[#2c2c2c]" />
      <span className="w-[480px] pt-[5px]">0 Connections Selected</span>
      <span className="mt-[5px] h-4 w-px bg-[#2c2c2c]" />
      <button className="mt-1 ml-auto h-6 w-[43px] overflow-hidden rounded-tl-[3px] border border-[#222] bg-[#555] pl-[5px] text-left leading-5">Panels</button>
    </footer>
  );
}

function Scribbles() {
  return (
    <svg viewBox="0 0 110 570" className="pointer-events-none absolute top-0 left-0 h-[570px] w-[110px]" fill="none" stroke="#e8201c" strokeWidth="5" strokeLinecap="round" strokeLinejoin="round">
      <path d="M43 174Q30 173 16 177Q4 181 8 187Q12 194 28 197Q60 202 84 197Q101 194 102 180Q103 166 96 164Q78 161 58 164Q44 167 36 170" />
      <path d="M4 529Q20 524 36 527L56 530Q63 531 62 535L59 549Q56 558 50 558H30L9 560Q7 545 8 527" />
    </svg>
  );
}

export default function App() {
  return (
    <div className={"relative flex h-screen overflow-hidden bg-white pl-[5px] text-[#e4e4e4] " + FONT}>
      <div className="flex min-w-0 flex-1 flex-col border-l-2 border-[#2a2a2a] bg-[#363636]">
        <Header />
        <div className="flex min-h-0 flex-1 pl-0.5">
          <div className="flex pt-[3px]"><LeftPanel /></div>
          <main className="ml-[7px] flex min-w-0 flex-1 flex-col">
            <DocTabs />
            <div className="relative min-h-0 flex-1 bg-[#6e6a68]">
              <Board />
              <Hud />
              <ActiveBar />
            </div>
            <LayerTabs />
          </main>
          <div className="mt-[3px] mb-[3px] ml-[3px] flex w-[23px] shrink-0 flex-col gap-0.5 overflow-hidden bg-[#424242] pt-px pl-[3px] text-[13px]">
            <button className="h-[89px] w-6 rounded-l border border-[#262626] bg-[#555] leading-5 whitespace-nowrap [writing-mode:vertical-rl]">Components</button>
            <button className="h-[127px] w-6 rounded-l border border-[#262626] bg-[#555] leading-5 whitespace-nowrap [writing-mode:vertical-rl]">View Configuration</button>
          </div>
        </div>
        <StatusBar />
      </div>
      <Scribbles />
    </div>
  );
}
